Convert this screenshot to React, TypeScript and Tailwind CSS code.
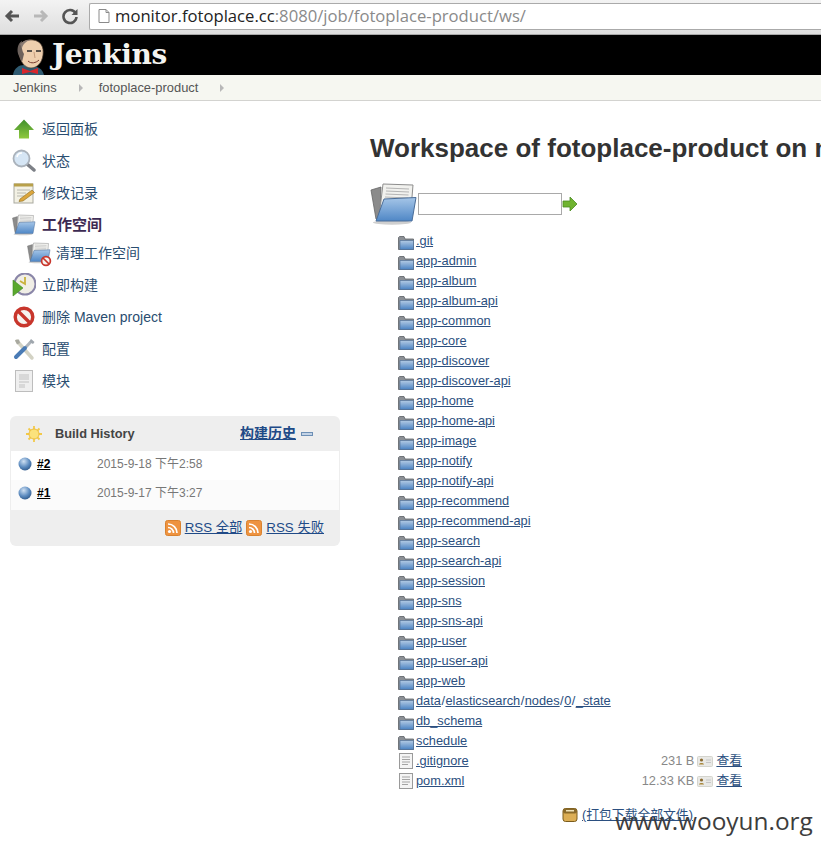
import React from "react";

const sans = { fontFamily: '"Liberation Sans", "Noto Sans CJK SC", sans-serif' };

function Folder({ className = "w-4 h-4" }: { className?: string }) {
  return (
    <svg viewBox="0 0 16 16" className={className}>
      <defs>
        <linearGradient id="fldG" x1="0" y1="0" x2="0" y2="1">
          <stop offset="0" stopColor="#b4cbe4" />
          <stop offset="1" stopColor="#4a82c2" />
        </linearGradient>
      </defs>
      <path d="M0.5 3.500V15.500H15.500V5H7L6 2.500H1.500Z" fill="#8b8f94" stroke="#5c6066" strokeWidth="0.8" />
      <path d="M2 6.500H15.500V15.500H2Z" fill="url(#fldG)" stroke="#50719a" strokeWidth="0.7" />
    </svg>
  );
}

function FileIcon() {
  return (
    <svg viewBox="0 0 16 16" className="w-4 h-4">
      <rect x="1.500" y="0.500" width="13" height="15" fill="#f4f4f4" stroke="#9a9a9a" />
      <path d="M4 4H12M4 6.500H12M4 9H12M4 11.500H10" stroke="#a4a4a4" strokeWidth="1" />
    </svg>
  );
}

function ViewIcon() {
  return (
    <svg viewBox="0 0 16 16" className="w-4 h-4">
      <rect x="0.500" y="3.500" width="15" height="10" rx="1" fill="#e9e9e6" stroke="#d4d4cd" />
      <circle cx="4.500" cy="7" r="1.600" fill="#8a6a30" />
      <path d="M2 11.500C2 9.500 7 9.500 7 11.500Z" fill="#a9883c" />
      <path d="M9 7H14M9 9.500H14" stroke="#c6c6c6" />
    </svg>
  );
}

function Rss() {
  return (
    <svg viewBox="0 0 16 16" className="w-4 h-4 shrink-0">
      <rect x="0.500" y="0.500" width="15" height="15" rx="2" fill="#ee9340" stroke="#d9822f" />
      <circle cx="4.500" cy="11.500" r="1.600" fill="#fff" />
      <path d="M3 7.500A5.500 5.500 0 0 1 8.500 13M3 4A9 9 0 0 1 12 13" stroke="#fff" strokeWidth="1.700" fill="none" />
    </svg>
  );
}

function Ball() {
  return (
    <svg viewBox="0 0 14 14" className="w-[14px] h-[14px] shrink-0">
      <defs>
        <radialGradient id="ballG" cx="0.4" cy="0.3" r="0.8">
          <stop offset="0" stopColor="#cfe0f2" />
          <stop offset="0.55" stopColor="#5d8cc0" />
          <stop offset="1" stopColor="#264f80" />
        </radialGradient>
      </defs>
      <circle cx="7" cy="7" r="6.500" fill="url(#ballG)" />
    </svg>
  );
}

function OpenFolder({ className }: { className: string }) {
  return (
    <svg viewBox="0 0 48 42" className={className}>
      <defs>
        <linearGradient id="ofG" x1="0" y1="0" x2="0" y2="1">
          <stop offset="0" stopColor="#a6c6e8" />
          <stop offset="1" stopColor="#4f87c6" />
        </linearGradient>
      </defs>
      <ellipse cx="22" cy="39.500" rx="19" ry="2.200" fill="#cfcfcf" />
      <path d="M1 7L11 4L10 36H6Z" fill="#8b8b8b" stroke="#666" strokeWidth="0.8" />
      <path d="M13 1L43 2L41 26H10Z" fill="#f1f1ee" stroke="#8d8d8d" strokeWidth="1" />
      <path d="M16 5L39 6M16 8L39 9M15.500 11L38.500 12M15 14L38 15" stroke="#b4b4b4" strokeWidth="1" />
      <path d="M14 16L46 14.500L42 38H6Z" fill="url(#ofG)" stroke="#4a6d98" strokeWidth="1" />
    </svg>
  );
}

function ArrowUp() {
  return (
    <svg viewBox="0 0 24 24" className="w-6 h-6">
      <defs>
        <linearGradient id="upG" x1="0" y1="0" x2="0" y2="1">
          <stop offset="0" stopColor="#3f8f2c" />
          <stop offset="1" stopColor="#8fc93f" />
        </linearGradient>
      </defs>
      <path d="M12 2.500L22 13H17V21.500H7V13H2Z" fill="url(#upG)" />
    </svg>
  );
}

function Search() {
  return (
    <svg viewBox="0 0 24 24" className="w-6 h-6">
      <path d="M15 15L22 21" stroke="#7d8087" strokeWidth="3.500" strokeLinecap="round" />
      <circle cx="9.500" cy="9.500" r="8" fill="#d6e6f5" stroke="#aab2bb" strokeWidth="1.800" />
      <path d="M5 8A5 5 0 0 1 10 4" stroke="#fff" strokeWidth="1.500" fill="none" />
    </svg>
  );
}

function Notepad() {
  return (
    <svg viewBox="0 0 24 24" className="w-6 h-6">
      <rect x="2" y="3" width="19" height="19" fill="#f3f1e4" stroke="#a9a9a0" />
      <rect x="2" y="2.500" width="19" height="3" fill="#b8a04a" />
      <path d="M5 9H18M5 12H14M5 15H12" stroke="#b9b9b0" />
      <path d="M8 18L20 9L22.500 11.500L11 20L7 20.500Z" fill="#dca63c" stroke="#8a6c22" strokeWidth="0.600" />
    </svg>
  );
}

function Build() {
  return (
    <svg viewBox="0 0 24 24" className="w-6 h-6">
      <circle cx="13" cy="11" r="10.500" fill="#f0eee6" stroke="#8a86a8" strokeWidth="2" />
      <path d="M13 4V11L8 8" stroke="#c9b23c" strokeWidth="1.800" fill="none" />
      <path d="M1 7L11 15L1 23Z" fill="#5aa82e" stroke="#3f8a22" strokeWidth="0.600" />
    </svg>
  );
}

function NoEntry({ className = "w-6 h-6" }: { className?: string }) {
  return (
    <svg viewBox="0 0 24 24" className={className}>
      <circle cx="12" cy="12" r="8.800" fill="#f6f3ef" stroke="#c8362c" strokeWidth="3.400" />
      <path d="M6 6L18 18" stroke="#c8362c" strokeWidth="3.400" />
    </svg>
  );
}

function Tools() {
  return (
    <svg viewBox="0 0 24 24" className="w-6 h-6">
      <path d="M5 4L20 21" stroke="#d3d2c4" strokeWidth="3.500" strokeLinecap="round" />
      <path d="M3 3L7 2.500L8 6L5 7.500Z" fill="#a8a89f" />
      <path d="M14 10L20 3.500" stroke="#b0b6bc" strokeWidth="3" />
      <path d="M19 2L22.500 5L21 7L17.500 5Z" fill="#9fa6ad" />
      <path d="M13 11L4 20" stroke="#4a7bb5" strokeWidth="4" strokeLinecap="round" />
    </svg>
  );
}

function Module() {
  return (
    <svg viewBox="0 0 24 24" className="w-6 h-6">
      <rect x="3.500" y="1.500" width="17" height="21" fill="#efefef" stroke="#bdbdbd" />
      <rect x="7" y="5" width="10" height="6" fill="#d8d8d8" />
      <rect x="7" y="12" width="10" height="2" fill="#d8d8d8" />
      <rect x="7" y="15" width="6" height="4" fill="#d8d8d8" />
    </svg>
  );
}

function Sun() {
  return (
    <svg viewBox="0 0 24 24" className="w-6 h-6">
      <g stroke="#f2c94a" strokeWidth="1.800">
        <path d="M12 4V20M4 12H20M6.500 6.500L17.500 17.500M17.500 6.500L6.500 17.500" />
      </g>
      <circle cx="12" cy="12" r="5" fill="#fbe27c" stroke="#efbf3f" />
    </svg>
  );
}

function Jenkins() {
  return (
    <svg viewBox="0 0 34 37" className="w-[34px] h-[37px] shrink-0">
      <path d="M0 37C1 30 6 27 11 27L24 29C29 31 30 34 31 37Z" fill="#2f5a70" />
      <path d="M6 15C5 5 12 1 20 2C28 3 31 9 30 17C29 25 24 30 18 30C12 30 7 24 6 15Z" fill="#eecfae" stroke="#4c3b2e" strokeWidth="0.700" />
      <path d="M6 18C3 12 5 5 9 3C8 8 9 13 11 16L9 24C8 22 7 20 6 18Z" fill="#6d625c" />
      <path d="M7 6C11 2 15 1.500 18 2C13 3 10 6 9 10Z" fill="#8a7b72" />
      <path d="M14 13H19M23 13H28" stroke="#2a2a2a" strokeWidth="1.300" />
      <path d="M21 14L22 20" stroke="#c49b7c" strokeWidth="1" />
      <path d="M15 23C18 26 23 25 26 22" stroke="#7a3e32" strokeWidth="1" fill="none" />
      <path d="M9 30L17 33L25 30V36L17 34L9 36Z" fill="#d8262c" />
    </svg>
  );
}

function ActionRow({ icon, label, bold }: { icon: React.ReactNode; label: string; bold?: boolean }) {
  return (
    <div className="flex h-8 items-center gap-[6px] pl-3">
      {icon}
      <span className={bold ? "text-[15px] font-bold text-[#3c2a52]" : "text-[14px] text-[#2a4d70]"}>{label}</span>
    </div>
  );
}

const L = ({ children }: { children: React.ReactNode }) => (
  <a className="text-[#2b4f80] underline">{children}</a>
);

const Slash = () => <span className="px-[0.5px] text-[#2b4f80]">/</span>;

const folders = [
  ".git", "app-admin", "app-album", "app-album-api", "app-common", "app-core", "app-discover", "app-discover-api",
  "app-home", "app-home-api", "app-image", "app-notify", "app-notify-api", "app-recommend", "app-recommend-api",
  "app-search", "app-search-api", "app-session", "app-sns", "app-sns-api", "app-user", "app-user-api", "app-web",
];

export default function App() {
  return (
    <div className="relative h-[851px] w-[821px] overflow-hidden bg-white" style={sans}>
      {/* browser toolbar */}
      <div className="flex h-[35px] items-center border-b border-[#a8a8a8] bg-gradient-to-b from-[#f3f3f3] to-[#dedede] pb-[2px] pl-[3px]">
        <svg viewBox="0 0 18 18" className="h-[18px] w-[18px]"><path d="M16 9H5M9 4L4 9L9 14" stroke="#555" strokeWidth="3" fill="none" /></svg>
        <svg viewBox="0 0 18 18" className="ml-[11px] h-[18px] w-[18px]"><path d="M2 9H13M9 4L14 9L9 14" stroke="#b8b8b8" strokeWidth="3" fill="none" /></svg>
        <svg viewBox="0 0 18 18" className="ml-[11px] h-[18px] w-[18px]"><path d="M14.500 6A6.500 6.500 0 1 0 15.500 10" stroke="#555" strokeWidth="2.600" fill="none" /><path d="M16.500 2V8H10.500Z" fill="#555" /></svg>
        <div className="ml-[10px] flex h-[27px] flex-1 items-center rounded-l-[2px] border border-r-0 border-[#aaaaaa] bg-white pl-2">
          <svg viewBox="0 0 12 14" className="h-[14px] w-3"><path d="M1 .5H8L11 3.500V13.500H1Z M8 .5V3.500H11" stroke="#8a8a8a" fill="#fff" /></svg>
          <span className="ml-[5px] text-[16.650px] leading-none text-[#222]" style={{ fontFamily: '"Open Sans", sans-serif' }}>
            monitor.fotoplace.cc<span className="text-[#8a8a8a]">:8080/job/fotoplace-product/ws/</span>
          </span>
        </div>
      </div>

      {/* Jenkins header */}
      <div className="flex h-10 items-end overflow-hidden bg-black pl-[13px]">
        <Jenkins />
        <span className="mb-[6px] ml-[5px] text-[28px] font-bold leading-none text-[#f4f4f0]" style={{ fontFamily: '"DejaVu Serif", "Liberation Serif", serif', letterSpacing: "-0.4px" }}>
          Jenkins
        </span>
      </div>

      {/* breadcrumb */}
      <div className="flex h-[26px] items-center border-b border-[#d3d3d0] bg-[#f6f7f1] pl-[13px] pt-[1px] text-[12.900px] text-[#555]">
        <span>Jenkins</span>
        <span className="ml-[22px] h-0 w-0 border-y-[4px] border-l-[4px] border-y-transparent border-l-[#b8b8b8]" />
        <span className="ml-[16px]">fotoplace-product</span>
        <span className="ml-[22px] h-0 w-0 border-y-[4px] border-l-[4px] border-y-transparent border-l-[#b8b8b8]" />
      </div>

      <div className="flex">
        {/* side panel */}
        <aside className="w-[370px] shrink-0">
          <div className="pt-[12px]">
            <ActionRow icon={<ArrowUp />} label="返回面板" />
            <ActionRow icon={<Search />} label="状态" />
            <ActionRow icon={<Notepad />} label="修改记录" />
            <ActionRow icon={<OpenFolder className="h-6 w-6" />} label="工作空间" bold />
            <div className="mb-1 flex h-6 items-center gap-[5px] pl-[27px]">
              <span className="relative h-6 w-6">
                <OpenFolder className="h-6 w-6" />
                <span className="absolute bottom-[-2px] right-[-1px]"><NoEntry className="h-[12px] w-[12px]" /></span>
              </span>
              <span className="text-[14px] text-[#2a4d70]">清理工作空间</span>
            </div>
            <ActionRow icon={<Build />} label="立即构建" />
            <ActionRow icon={<NoEntry />} label="删除 Maven project" />
            <ActionRow icon={<Tools />} label="配置" />
            <ActionRow icon={<Module />} label="模块" />
          </div>

          {/* build history */}
          <div className="ml-[10px] mt-[19px] w-[330px] rounded-[6px] bg-[#eeeeee] pb-[1px]">
            <div className="flex h-[35px] items-center pl-[12px] pr-[27px] text-xs">
              <Sun />
              <span className="ml-[9px] text-[12.800px] font-bold text-[#444]">Build History</span>
              <a className="ml-auto text-[14px] font-bold text-[#204a87] underline">构建历史</a>
              <span className="ml-[5px] h-[4px] w-[12px] border border-[#6d8fb5] bg-[#c3d3e6]" />
            </div>
            <div className="mx-px flex h-[29px] items-center bg-white pb-[4px] pl-[7px] text-xs">
              <Ball />
              <a className="ml-[5px] w-[60px] font-bold text-black underline">#2</a>
              <span className="text-[#777]">2015-9-18 下午2:58</span>
            </div>
            <div className="mx-px flex h-[30px] items-center bg-[#fbfbfb] pb-[4px] pl-[7px] text-xs">
              <Ball />
              <a className="ml-[5px] w-[60px] font-bold text-black underline">#1</a>
              <span className="text-[#777]">2015-9-17 下午3:27</span>
            </div>
            <div className="flex h-[35px] items-center justify-end pr-4 text-[13.300px] text-[#204a87]">
              <Rss />
              <span className="ml-[4px] underline">RSS 全部</span>
              <span className="ml-[4px]"><Rss /></span>
              <span className="ml-[4px] underline">RSS 失败</span>
            </div>
          </div>
        </aside>

        {/* main */}
        <main className="min-w-0 flex-1">
          <h1 className="mt-[30px] whitespace-nowrap text-[26px] font-bold leading-[34px] text-[#333]">
            Workspace of fotoplace-product on master
          </h1>
          <div className="mt-[18px] flex items-center">
            <OpenFolder className="h-[42px] w-12" />
            <div className="h-[22px] w-[144px] border border-[#a9a9a9] bg-white" />
            <svg viewBox="0 0 16 16" className="h-4 w-4"><path d="M1 5H8V1L15 8L8 15V11H1Z" fill="#6fb330" stroke="#4a8a22" strokeWidth="0.800" /></svg>
          </div>
          <div className="ml-[28px] mt-[6px] w-[344px] text-[12.800px]">
            {folders.map((f) => (
              <div key={f} className="flex h-5 items-center">
                <span className="mr-[2px] mt-[2px]"><Folder /></span>
                <L>{f}</L>
              </div>
            ))}
            <div className="flex h-5 items-center">
              <span className="mr-[2px] mt-[2px]"><Folder /></span>
              <L>data</L><Slash /><L>elasticsearch</L><Slash /><L>nodes</L><Slash /><L>0</L><Slash /><L>_state</L>
            </div>
            {["db_schema", "schedule"].map((f) => (
              <div key={f} className="flex h-5 items-center">
                <span className="mr-[2px] mt-[2px]"><Folder /></span>
                <L>{f}</L>
              </div>
            ))}
            {[[".gitignore", "231 B"], ["pom.xml", "12.33 KB"]].map(([n, s]) => (
              <div key={n} className="flex h-5 items-center">
                <span className="mr-[2px]"><FileIcon /></span>
                <L>{n}</L>
                <span className="ml-auto text-[#888]">{s}</span>
                <span className="ml-[3px] mr-[3px]"><ViewIcon /></span>
                <L>查看</L>
              </div>
            ))}
            <div className="mt-[14px] flex items-center pl-[164px]">
              <svg viewBox="0 0 16 16" className="mr-[4px] h-4 w-4">
                <rect x="1" y="1.500" width="14" height="13" rx="2.500" fill="#dcae55" stroke="#7a5c1c" />
                <rect x="1" y="1.500" width="14" height="5" rx="2" fill="#8a6a2a" />
                <rect x="4" y="3" width="8" height="1.500" fill="#efe2b8" />
              </svg>
              <L>(打包下载全部文件)</L>
            </div>
          </div>
        </main>
      </div>

      {/* watermark */}
      <span className="absolute left-[615px] top-[804px] text-[24.400px] leading-[34px] text-[#3d3d3d]" style={{ fontFamily: '"Open Sans", sans-serif' }}>
        www.wooyun.org
      </span>
    </div>
  );
}
